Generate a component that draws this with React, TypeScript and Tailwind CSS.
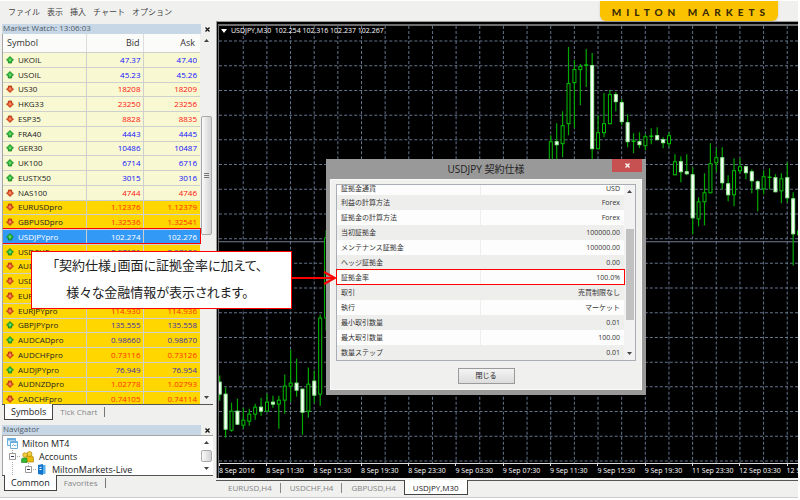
import { useState } from "react";

type Quote = { symbol: string; bid: string; ask: string; up: boolean };

const quotes: Quote[] = [
  { symbol: "UKOIL", bid: "47.37", ask: "47.40", up: true },
  { symbol: "USOIL", bid: "45.23", ask: "45.26", up: true },
  { symbol: "US30", bid: "18208", ask: "18209", up: false },
  { symbol: "HKG33", bid: "23250", ask: "23256", up: false },
  { symbol: "ESP35", bid: "8828", ask: "8835", up: false },
  { symbol: "FRA40", bid: "4443", ask: "4445", up: true },
  { symbol: "GER30", bid: "10486", ask: "10487", up: true },
  { symbol: "UK100", bid: "6714", ask: "6716", up: true },
  { symbol: "EUSTX50", bid: "3015", ask: "3016", up: true },
  { symbol: "NAS100", bid: "4744", ask: "4746", up: false },
  { symbol: "EURUSDpro", bid: "1.12376", ask: "1.12379", up: false },
  { symbol: "GBPUSDpro", bid: "1.32536", ask: "1.32541", up: false },
  { symbol: "USDJPYpro", bid: "102.274", ask: "102.276", up: true },
  { symbol: "USDCHFpro", bid: "0.97181", ask: "0.97186", up: true },
  { symbol: "AUDUSDpro", bid: "0.75312", ask: "0.75316", up: false },
  { symbol: "USDCADpro", bid: "1.30642", ask: "1.30648", up: false },
  { symbol: "EURGBPpro", bid: "0.84783", ask: "0.84789", up: false },
  { symbol: "EURJPYpro", bid: "114.930", ask: "114.936", up: false },
  { symbol: "GBPJPYpro", bid: "135.555", ask: "135.558", up: true },
  { symbol: "AUDCADpro", bid: "0.98660", ask: "0.98670", up: true },
  { symbol: "AUDCHFpro", bid: "0.73116", ask: "0.73126", up: false },
  { symbol: "AUDJPYpro", bid: "76.949", ask: "76.954", up: true },
  { symbol: "AUDNZDpro", bid: "1.02778", ask: "1.02793", up: false },
  { symbol: "CADCHFpro", bid: "0.74105", ask: "0.74114", up: false },
];

const specs = [
  ["証拠金通貨", "USD"],
  ["利益の計算方法", "Forex"],
  ["証拠金の計算方法", "Forex"],
  ["当初証拠金", "100000.00"],
  ["メンテナンス証拠金", "100000.00"],
  ["ヘッジ証拠金", "0.00"],
  ["証拠金率", "100.0%"],
  ["取引", "売買制限なし"],
  ["執行", "マーケット"],
  ["最小取引数量", "0.01"],
  ["最大取引数量", "100.00"],
  ["数量ステップ", "0.01"],
];

const menus = ["ファイル", "表示", "挿入", "チャート", "オプション"];

const times = [
  "8 Sep 2016", "8 Sep 11:30", "8 Sep 15:30", "8 Sep 19:30", "8 Sep 23:30",
  "9 Sep 03:30", "9 Sep 07:30", "9 Sep 11:30", "9 Sep 15:30", "9 Sep 19:30",
  "11 Sep 23:30", "12 Sep 03:30", "12 Sep 07:30",
];

const charts = ["EURUSD,H4", "USDCHF,H4", "GBPUSD,H4", "USDJPY,M30"];

// slot, high, low, body top, body bottom, filled
const candles: [number, number, number, number, number, boolean][] = [
  [0, 375, 400, 381, 394, true], [1, 387, 437, 393, 429, true],
  [2, 402, 431, 410, 430, false], [3, 398, 424, 410, 424, true],
  [4, 407, 428, 419, 425, false], [5, 408, 425, 413, 421, false],
  [6, 403, 419, 406, 414, false], [7, 397, 415, 406, 411, true],
  [8, 393, 411, 401, 411, false], [9, 395, 407, 401, 404, true],
  [10, 395, 428, 399, 404, false], [11, 374, 413, 385, 400, false],
  [12, 349, 401, 382, 386, false], [13, 358, 396, 382, 390, true],
  [14, 388, 434, 388, 412, true], [15, 367, 417, 383, 411, false],
  [16, 370, 402, 380, 395, true], [17, 314, 405, 317, 394, false],
  [18, 230, 330, 237, 318, false],
  [56, 135, 170, 141, 170, false], [57, 123, 160, 141, 145, true],
  [58, 111, 157, 125, 144, false], [59, 47, 135, 83, 124, false],
  [60, 60, 128, 69, 83, false], [61, 64, 105, 66, 70, false],
  [62, 49, 87, 65, 65, false], [63, 53, 165, 65, 149, true],
  [64, 115, 149, 132, 149, false], [65, 93, 137, 123, 133, false],
  [66, 90, 124, 94, 124, false], [67, 92, 111, 94, 102, true],
  [68, 99, 125, 102, 122, true], [69, 114, 147, 122, 142, true],
  [70, 133, 153, 141, 141, false], [71, 132, 148, 141, 145, true],
  [72, 134, 150, 136, 146, false], [73, 128, 144, 136, 136, false],
  [74, 127, 140, 135, 140, true], [75, 137, 148, 139, 143, true],
  [76, 132, 147, 135, 144, false], [77, 154, 175, 161, 175, false],
  [78, 156, 182, 161, 172, true], [79, 154, 175, 171, 174, true],
  [80, 167, 234, 174, 218, true], [81, 197, 226, 201, 219, false],
  [82, 173, 225, 192, 202, false], [83, 143, 193, 163, 193, false],
  [84, 148, 172, 157, 163, false], [85, 147, 189, 157, 183, true],
  [86, 175, 201, 183, 195, true], [87, 158, 206, 170, 195, false],
  [88, 158, 173, 166, 171, false], [89, 166, 179, 166, 173, true],
  [90, 169, 193, 171, 181, true], [91, 180, 211, 181, 189, true],
  [92, 170, 194, 176, 189, false], [93, 168, 189, 177, 177, false],
  [94, 174, 192, 177, 192, true], [95, 173, 203, 178, 191, false],
  [96, 162, 202, 177, 198, true], [97, 192, 265, 198, 234, true],
  [98, 225, 240, 230, 235, false],
];

function TickIcon({ up }: { up: boolean }) {
  const fill = up ? "#2fc43a" : "#f0592b";
  const edge = up ? "#14791f" : "#a52f10";
  return (
    <svg viewBox="0 0 8 8" className="size-2 shrink-0">
      <path
        d={up ? "M4 .5 7.5 4 6.3 4.8H5.6V7H2.4V4.8H1.7L.5 4Z" : "M4 7.5 .5 4 1.7 3.2H2.4V1H5.6V3.2H6.3L7.5 4Z"}
        fill={fill}
        stroke={edge}
        strokeWidth=".8"
      />
      <path d="M3.3 3.2h1.4v1.6H3.3z" fill="#fff" opacity=".55" />
    </svg>
  );
}

function Arrow({ down }: { down?: boolean }) {
  return (
    <svg viewBox="0 0 5 3" className="h-[3px] w-[5px]">
      <path d={down ? "M0 0h5L2.5 3Z" : "M0 3h5L2.5 0Z"} fill="#444" />
    </svg>
  );
}

function Cross({ color }: { color: string }) {
  return (
    <svg viewBox="0 0 5 5" className="size-[5px]">
      <path d="M.5.5l4 4M4.5.5l-4 4" stroke={color} strokeWidth="1.3" />
    </svg>
  );
}

function PanelTitle({ title }: { title: string }) {
  return (
    <div className="flex h-[10px] shrink-0 items-start justify-between bg-[#c8d7e6] pl-px text-[8px] leading-[7px] text-[#4d5a68]">
      <h2>{title}</h2>
      <button aria-label={`Close ${title}`} className="flex h-full w-3 items-center justify-center bg-[#f0f0ef]">
        <Cross color="#111" />
      </button>
    </div>
  );
}

function PanelTabs({ tabs }: { tabs: string[] }) {
  const [active, setActive] = useState(tabs[0]);
  return (
    <div className="flex h-4 shrink-0 items-start border-t border-[#555] pl-0.5">
      {tabs.map((tab) =>
        tab === active ? (
          <button key={tab} className="-mt-px h-4 border-x border-b border-[#444] bg-white px-1.5 text-[9px] leading-[14px] text-[#222]">
            {tab}
          </button>
        ) : (
          <button key={tab} onClick={() => setActive(tab)} className="mt-0.5 h-[10px] border-r border-[#777] px-[7px] text-[8px] leading-[8px] text-[#858585]">
            {tab}
          </button>
        )
      )}
    </div>
  );
}

function MarketWatch() {
  const rowColor = (i: number) => {
    if (i === 12) return "bg-[#3399f7] text-white";
    return i < 10 ? "bg-[#f8f8d2]" : "bg-[#ffd600]";
  };
  const priceColor = (q: Quote, i: number) => {
    if (i === 12) return "text-white";
    if (q.up) return i < 10 ? "text-[#1010ff]" : "text-[#3a2fa8]";
    return i < 10 ? "text-[#ff1010]" : "text-[#ff3000]";
  };

  return (
    <section className="flex min-h-0 flex-1 flex-col">
      <PanelTitle title="Market Watch: 13:06:03" />
      <div className="relative flex min-h-0 flex-1 overflow-hidden border-l border-[#a5a5a5] bg-[#f0f0ef]">
        <div className="min-w-0 flex-1">
          <table className="h-[372px] w-full table-fixed border-separate border-spacing-0 text-[8px] leading-[10px] text-[#222]">
            <thead>
              <tr className="h-[18px] bg-[#fbfbfa] text-[9px] text-[#333]">
                <th className="w-[84px] border-r border-[#ddd] pl-1 text-left font-normal">Symbol</th>
                <th className="border-r border-[#ddd] pr-[3px] text-right font-normal">Bid</th>
                <th className="pr-[5px] text-right font-normal">Ask</th>
              </tr>
            </thead>
            <tbody>
              {quotes.map((q, i) => (
                <tr key={q.symbol} className={rowColor(i)}>
                  <td className="border-t border-r border-[#cfcfcf] pl-[3px]">
                    <div className="flex items-center gap-1">
                      <TickIcon up={q.up} />
                      {q.symbol}
                    </div>
                  </td>
                  <td className={`border-t border-r border-[#cfcfcf] pr-0.5 text-right ${priceColor(q, i)}`}>{q.bid}</td>
                  <td className={`border-t border-[#cfcfcf] pr-[3px] text-right ${priceColor(q, i)}`}>{q.ask}</td>
                </tr>
              ))}
            </tbody>
          </table>
        </div>
        <div className="flex w-[13px] flex-col items-center py-[5px]">
          <Arrow />
          <div className="mt-[74px] flex h-[119px] w-[11px] flex-col items-center justify-center gap-px rounded-xs border border-[#a8a8a8] bg-linear-to-r from-[#fafafa] to-[#d2d2d4]">
            <i className="h-px w-[5px] bg-[#777]" />
            <i className="h-px w-[5px] bg-[#777]" />
            <i className="h-px w-[5px] bg-[#777]" />
          </div>
          <div className="mt-auto">
            <Arrow down />
          </div>
        </div>
        <div className="absolute top-[194px] right-3 -left-px h-4 border border-[#f00]" />
      </div>
      <PanelTabs tabs={["Symbols", "Tick Chart"]} />
    </section>
  );
}

function Expander() {
  return (
    <svg viewBox="0 0 7 7" className="size-[7px] shrink-0">
      <path d="M.5.5h6v6h-6z" fill="#fff" stroke="#999" />
      <path d="M2 3.5h3" stroke="#335" />
    </svg>
  );
}

function Navigator() {
  return (
    <section className="flex shrink-0 flex-col">
      <PanelTitle title="Navigator" />
      <div className="relative flex border-t border-l border-[#a5a5a5] bg-white">
        <ul className="flex-1 overflow-hidden text-[9px] leading-[13px] text-[#222]">
          <li className="flex h-[14px] items-center gap-1 pl-1">
            <svg viewBox="0 0 11 11" className="size-[11px]">
              <path d="M.5.5h8v7h-8z" fill="#e4f3fd" stroke="#6aaede" />
              <path d="M.5 1.5h8" stroke="#6aaede" strokeWidth="2" />
              <path d="M3.5 3.5h7v7h-7z" fill="#fff" stroke="#6aaede" />
              <path d="M3.5 4.5h7M5 8l1.5-1.5L8 8l1.5-1" stroke="#6aaede" fill="none" />
            </svg>
            Milton MT4
          </li>
          <li className="flex h-[13px] items-center gap-[5px] pl-1.5">
            <Expander />
            <svg viewBox="0 0 13 12" className="h-3 w-[13px]">
              <path d="M5 6.5Q5 5 7 5h3.5Q12.5 5 12.5 7v4H5Z" fill="#e9b90e" stroke="#a67c00" strokeWidth=".6" />
              <circle cx="8.5" cy="3" r="2.5" fill="#f3cd3c" stroke="#a67c00" strokeWidth=".6" />
              <circle cx="4" cy="4" r="2.3" fill="#f3cd3c" stroke="#a67c00" strokeWidth=".6" />
              <path d="M.5 11.5V8.5Q.5 7 2.5 7h2Q6 7 6 8.5v3Z" fill="#35b935" stroke="#15801a" strokeWidth=".6" />
            </svg>
            Accounts
          </li>
          <li className="flex h-3 items-center gap-1.5 pl-[22px]">
            <Expander />
            <svg viewBox="0 0 8 11" className="h-[11px] w-2">
              <path d="M0 1l5-1v11l-5-1Z" fill="#1374c9" />
              <path d="M5 1h2.5v9H5Z" fill="#58aeea" />
              <path d="M1.5 3.5l2-.3M1.5 5.5h2" stroke="#fff" />
            </svg>
            MiltonMarkets-Live
          </li>
        </ul>
        <svg className="absolute top-3 left-0 h-[27px] w-9" fill="none" stroke="#aaa" strokeDasharray="1 1">
          <path d="M9.5 0v5M9.5 14v13M14 8.5h4M25.5 15v3M30 21.5h4" />
        </svg>
        <div className="flex w-[13px] flex-col items-center justify-between py-[5px]">
          <Arrow />
          <div className="h-3 w-[11px] rounded-xs border border-[#a8a8a8] bg-linear-to-r from-[#fafafa] to-[#d2d2d4]" />
          <Arrow down />
        </div>
      </div>
      <PanelTabs tabs={["Common", "Favorites"]} />
    </section>
  );
}

function PriceChart() {
  const columns = Array.from({ length: 24 }, (_, i) => 243.2 + i * 23.61);
  const lines = Array.from({ length: 18 }, (_, i) => 41 + i * 24.66);
  return (
    <svg viewBox="219 26 578 437" preserveAspectRatio="xMinYMin slice" className="absolute inset-0 size-full">
      <g stroke="#64748b" strokeWidth="1" strokeDasharray="3 2">
        {columns.map((x) => (
          <line key={x} x1={x} x2={x} y1="26" y2="463" />
        ))}
        {lines.map((y) => (
          <line key={y} x1="219" x2="797" y1={y} y2={y} />
        ))}
      </g>
      <path d="M219 241.5H797" stroke="#718096" />
      {candles.map(([slot, high, low, top, bottom, filled]) => {
        const x = 219.7 + slot * 5.902;
        return (
          <g key={slot}>
            <path d={`M${x} ${high}V${low}`} stroke="#00a800" strokeWidth="1.2" />
            {top === bottom ? (
              <path d={`M${x - 2} ${top}h4`} stroke="#00d800" strokeWidth="1.3" />
            ) : (
              <rect
                x={x - 1.5}
                y={top + 0.5}
                width="3"
                height={bottom - top - 1}
                fill={filled ? "#fff" : "#000"}
                stroke={filled ? "#96f596" : "#00c000"}
              />
            )}
          </g>
        );
      })}
    </svg>
  );
}

function ChartWindow() {
  const [active, setActive] = useState("USDJPY,M30");
  return (
    <main className="flex min-w-0 flex-1 flex-col">
      <div className="flex min-h-0 flex-1 flex-col border-t border-l border-[#999] bg-black pt-0.5 pl-px">
        <div className="flex min-h-0 flex-1 flex-col border-t-2 border-l border-[#6d6d6d]">
          <div className="relative min-h-0 flex-1 overflow-hidden border-b border-[#ddd]">
            <PriceChart />
            <h1 className="relative flex items-center gap-1 pt-px pl-0.5 text-[7px] leading-2 text-white">
              <svg viewBox="0 0 6 4" className="h-1 w-1.5">
                <path d="M0 0h6L3 4Z" fill="#fff" />
              </svg>
              <span className="whitespace-pre">USDJPY,M30  102.254 102.316 102.237 102.267</span>
            </h1>
          </div>
          <ol className="flex h-[14px] overflow-hidden text-[7px] leading-[10px] whitespace-nowrap text-white">
            {times.map((t) => (
              <li key={t} className="w-[8.17%] shrink-0">
                <div className="h-0.5 w-px bg-[#ddd]" />
                {t}
              </li>
            ))}
          </ol>
        </div>
      </div>
      <div className="mt-0.5 flex h-[17px] items-start border-t border-[#555] pl-[3px] text-[8px]">
        {charts.map((c, i) =>
          c === active ? (
            <button key={c} className="-mt-px h-[15px] border-x border-b border-[#444] bg-white px-2 leading-[13px] text-[#222]">
              {c}
            </button>
          ) : (
            <button
              key={c}
              onClick={() => setActive(c)}
              className={`mt-0.5 h-[10px] pr-2 pl-[9px] leading-[8px] text-[#858585] ${charts[i + 1] && charts[i + 1] !== active ? "border-r border-[#888]" : ""}`}
            >
              {c}
            </button>
          )
        )}
      </div>
    </main>
  );
}

function SpecDialog() {
  return (
    <div role="dialog" aria-labelledby="spec-title" className="absolute top-[159px] left-[326px] flex w-80 flex-col bg-[#999] px-1 pb-[5px]">
      <div className="relative h-5">
        <h2 id="spec-title" className="text-center text-[10px] leading-5 text-[#222]">USDJPY 契約仕様</h2>
        <button aria-label="Close" className="absolute top-0 right-0 flex h-[13px] w-[30px] items-center justify-center bg-[#c75050]">
          <Cross color="#fff" />
        </button>
      </div>
      <div className="flex flex-col items-center border border-[#fafafa] bg-[#f0f0ef] px-[5px] pt-1 pb-[5px]">
        <div className="relative flex w-full border border-[#a9adb5] bg-[#f2f2f2]">
          <div className="flex-1">
            <table className="w-full table-fixed text-[7px] leading-[15px] text-[#333]">
              <tbody>
                {specs.map(([label, value], i) => (
                  <tr
                    key={label}
                    className={`${i === 0 ? "h-[10px] align-top leading-2" : "h-[15px]"} ${i % 2 ? "bg-[#eeeeed]" : "bg-[#fdfdfd]"}`}
                  >
                    <td className="w-1/2 border-r border-[#eee] p-0 pl-1">{label}</td>
                    <td className="p-0 pr-1 text-right">{value}</td>
                  </tr>
                ))}
              </tbody>
            </table>
          </div>
          <div className="flex w-[11px] flex-col items-center py-[5px]">
            <Arrow />
            <div className="mt-9 h-[91px] w-2 bg-[#c1c1c1]" />
            <div className="mt-auto">
              <Arrow down />
            </div>
          </div>
          <div className="absolute right-2.5 bottom-[75px] -left-px h-4 border border-[#f00]" />
        </div>
        <button className="mt-[7px] h-4 w-[57px] border border-[#9a9a9a] bg-linear-to-b from-[#f4f4f4] to-[#dcdcdc] text-[7px] leading-[14px] text-[#222]">
          閉じる
        </button>
      </div>
    </div>
  );
}

export default function App() {
  return (
    <div className="relative flex h-screen flex-col overflow-hidden bg-white pr-0.5 pb-0.5 font-['Open_Sans','Noto_Sans_CJK_JP',sans-serif]">
      <header className="flex h-[21px] shrink-0 items-center justify-between border-t border-white bg-[#f0f0ef] pr-5">
        <nav className="flex gap-[7px] pt-0.5 pl-2 text-[8px] text-[#444]">
          {menus.map((m) => (
            <button key={m}>{m}</button>
          ))}
        </nav>
        <div className="flex h-5 items-center rounded-b-md bg-[#fbc200] pt-0.5 pr-2 pl-3 font-['Lato',sans-serif] text-[10px] font-black tracking-[5px] text-[#3a2c00] shadow-sm">
          MILTON MARKETS
        </div>
      </header>

      <div className="flex min-h-0 flex-1 border-b border-[#ccc] bg-[#f0f0ef]">
        <aside className="flex w-[216px] shrink-0 flex-col gap-[5px] pt-[3px] pr-[3px] pb-1.5 pl-0.5">
          <MarketWatch />
          <Navigator />
        </aside>
        <ChartWindow />
      </div>

      <SpecDialog />

      <p className="absolute top-[251px] left-[31px] w-[261px] border border-[#f00] bg-white pr-2 pb-0.5 text-center text-[13px] leading-[27px] whitespace-nowrap text-[#222] [font-feature-settings:'palt']">
        「契約仕様」画面に証拠金率に加えて、
        <br />
        様々な金融情報が表示されます。
      </p>
      <svg viewBox="0 0 46 14" className="absolute top-[271px] left-[291px] h-[14px] w-[46px]" fill="none" stroke="#f00" strokeWidth="2">
        <path d="M0 7h44M33 1l11 6-11 6" />
      </svg>
    </div>
  );
}
